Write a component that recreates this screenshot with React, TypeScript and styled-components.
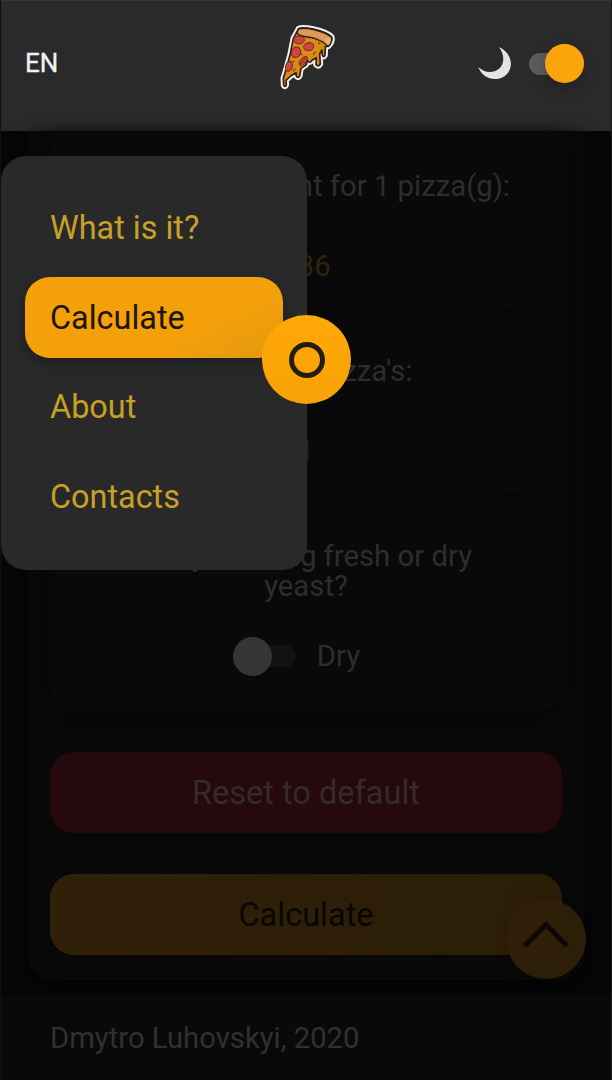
import React from 'react';
import styled, { createGlobalStyle } from 'styled-components';

const GlobalStyle = createGlobalStyle`
  * { box-sizing: border-box; }
  body {
    margin: 0;
    background: #060607;
    font-family: Roboto, sans-serif;
    overflow: hidden;
  }
  button { font-family: inherit; border: 0; margin: 0; padding: 0; }
`;

const Screen = styled.div`
  position: relative;
  width: 612px;
  height: 1080px;
  overflow: hidden;
  display: flex;
  flex-direction: column;
  background: #060607;
  border-left: 1px solid #101011;
  border-right: 1px solid #1b1b1c;
`;

const Header = styled.header`
  flex: none;
  height: 131px;
  padding: 0 27px 5px 24px;
  display: grid;
  grid-template-columns: 1fr 80px 1fr;
  align-items: center;
  background: #2a2a2b;
  border-top: 1px solid #363737;
`;

const Language = styled.span`
  margin-top: -2px;
  font-size: 26px;
  line-height: 30px;
  color: #f2f2f2;
  -webkit-text-stroke: 0.3px #f2f2f2;
`;

const Logo = styled.svg`
  display: block;
  width: 80px;
  height: 85px;
  margin-top: -12px;
`;

const ThemeControl = styled.div`
  display: flex;
  align-items: center;
  justify-content: flex-end;
  gap: 16px;
`;

const Moon = styled.svg`
  width: 37px;
  height: 38px;
  margin-top: -3px;
`;

const Track = styled.span<{ $on?: boolean }>`
  display: flex;
  align-items: center;
  justify-content: ${p => (p.$on ? 'flex-end' : 'flex-start')};
  width: ${p => (p.$on ? 55.5 : 63)}px;
  height: 22px;
  border-radius: 11px;
  background: ${p => (p.$on ? '#5b5b5c' : '#121214')};
`;

const Knob = styled.span<{ $on?: boolean }>`
  flex: none;
  width: 39px;
  height: 39px;
  border-radius: 50%;
  background: ${p => (p.$on ? '#fba50d' : '#353537')};
  box-shadow: ${p => (p.$on ? '0 6px 14px rgba(0,0,0,.22)' : 'none')};
`;

const Main = styled.main`
  flex: none;
  height: 864px;
  padding: 0 27px;
`;

const Form = styled.form`
  height: 849px;
  padding: 0 22px;
  background: #080809;
  border-radius: 0 0 24px 24px;
  box-shadow: 0 5px 16px #040405;
  display: flex;
  flex-direction: column;
`;

const Fields = styled.section`
  height: 581px;
  flex: none;
  padding: 40px 25px 0;
  display: flex;
  flex-direction: column;
  align-items: center;
  background: #09090a;
  border-radius: 0 0 24px 24px;
  box-shadow: 0 5px 16px #070708;
`;

const Label = styled.label<{ $offset?: number }>`
  display: block;
  padding-right: ${p => p.$offset ?? 0}px;
  font-size: 29.3px;
  line-height: 30px;
  color: #2d2d2f;
  text-align: center;
  white-space: pre-line;
`;

const Value = styled.output`
  width: 100%;
  height: 81px;
  margin: 25px 0 49px;
  padding-bottom: 2px;
  display: flex;
  align-items: center;
  justify-content: center;
  font-size: 29.3px;
  color: #2c240c;
  background: #09090a;
  border-radius: 24px;
  box-shadow: 0 5px 14px #070708;
`;

const YeastRow = styled.div`
  display: flex;
  align-items: center;
  gap: 21px;
  margin: 40px 19px 0 0;
`;

const Button = styled.button<{ $danger?: boolean }>`
  flex: none;
  width: 512px;
  height: 81px;
  margin-top: ${p => (p.$danger ? 40 : 41)}px;
  border-radius: 24px;
  font-size: 32.5px;
  line-height: 40px;
  color: ${p => (p.$danger ? '#342b2a' : '#080704')};
  background: ${p => (p.$danger ? '#26090d' : 'linear-gradient(100deg, #302009, #2c1d06)')};
`;

const Footer = styled.footer`
  height: 85px;
  padding: 28px 49px;
  font-size: 29.25px;
  line-height: 30px;
  color: #303032;
  background: #09090a;
`;

const ScrollTop = styled.button`
  position: absolute;
  left: 505px;
  top: 899px;
  width: 80px;
  height: 80px;
  border-radius: 50%;
  background: rgba(48, 32, 9, .94);
  box-shadow: 0 5px 12px rgba(0,0,0,.16);
`;

const Menu = styled.nav`
  position: absolute;
  left: 0;
  top: 155.5px;
  width: 305.5px;
  height: 414.5px;
  padding: 32px 24px;
  display: flex;
  flex-direction: column;
  gap: 8.2px;
  background: #292929;
  border-radius: 25px;
`;

const MenuItem = styled.a<{ $active?: boolean }>`
  display: flex;
  align-items: center;
  height: 81.4px;
  padding: 0 25px;
  border-radius: 25px;
  font-size: 32.4px;
  line-height: 40px;
  color: ${p => (p.$active ? '#1c1508' : '#c7a027')};
  background: ${p => (p.$active ? 'linear-gradient(155deg, #f4a00b 65%, #e3980f)' : 'none')};
  box-shadow: ${p => (p.$active ? '0 6px 14px rgba(0,0,0,.28)' : 'none')};
`;

const MenuToggle = styled.button`
  position: absolute;
  left: 261px;
  top: 315px;
  width: 89px;
  height: 89px;
  border-radius: 50%;
  display: flex;
  align-items: center;
  justify-content: center;
  background: linear-gradient(#ffa806, #f9a207);
`;

const Ring = styled.span`
  width: 36px;
  height: 36px;
  border: 5px solid #211d14;
  border-radius: 50%;
`;

const SLICE =
  'M101 41 C108 36 125 38 145 42 C168 47 193 57 200 66 C204 74 196 89 190 94 L181 94 L180 121 Q176 129 172 121 L171 105 L164 117 L166 147 Q160 157 153 149 L154 128 L141 136 Q134 147 128 137 L123 150 L108 160 L104 183 Q99 191 94 183 L93 173 L77 183 L63 196 L64 209 Q61 218 56 211 L55 190 L64 160 L76 116 L85 70 Z';

const PizzaLogo = () => (
  <Logo viewBox="0 0 240 255" aria-label="Pizza">
    <path d={SLICE} fill="#eee" stroke="#eee" strokeWidth="17" strokeLinejoin="round" />
    <path d={SLICE} fill="#d88b16" stroke="#33200f" strokeWidth="5" strokeLinejoin="round" />
    <path d="M101 42 C130 35 180 51 200 67 Q202 83 190 93 C179 84 169 77 151 71 C132 65 113 66 99 58 Q94 50 101 42Z" fill="#d99a5b" stroke="#33200f" strokeWidth="4" />
    <path d="M180 73 Q185 65 196 68 Q199 79 190 91 Q179 87 180 73Z" fill="#e5ae72" />
    <g fill="#ce4544" stroke="#792516" strokeWidth="3">
      <ellipse cx="102" cy="75" rx="16" ry="12" />
      <ellipse cx="131" cy="95" rx="15" ry="12" transform="rotate(-10 131 95)" />
      <ellipse cx="93" cy="112" rx="14" ry="16" transform="rotate(25 93 112)" />
      <ellipse cx="72" cy="154" rx="10" ry="15" transform="rotate(18 72 154)" />
      <ellipse cx="115" cy="138" rx="8" ry="16" transform="rotate(40 115 138)" />
    </g>
    <path d="M107 147 L123 128 M159 83 L166 86 M151 110 L145 120 M83 137 L88 142 M91 160 L84 169 M111 116 L109 121" fill="none" stroke="#80410f" strokeWidth="4" />
  </Logo>
);

export default function App() {
  return (
    <>
      <GlobalStyle />
      <Screen>
        <Header>
          <Language>EN</Language>
          <PizzaLogo />
          <ThemeControl>
            <Moon viewBox="45 50 111 114" aria-hidden="true">
              <path d="M113 62 C147 76 160 113 141 139 C119 169 66 164 52 122 C67 138 95 143 113 128 C134 111 129 80 113 62Z" fill="#e4e4e6" />
            </Moon>
            <Track $on><Knob $on /></Track>
          </ThemeControl>
        </Header>
        <Main>
          <Form>
            <Fields>
              <Label $offset={5}>Doughball weight for 1 pizza(g):</Label>
              <Value>236</Value>
              <Label>Count of pizza's:</Label>
              <Value>1</Value>
              <Label>{"Are you using fresh or dry\nyeast?"}</Label>
              <YeastRow>
                <Track><Knob /></Track>
                <Label as="span">Dry</Label>
              </YeastRow>
            </Fields>
            <Button type="button" $danger>Reset to default</Button>
            <Button type="button">Calculate</Button>
          </Form>
        </Main>
        <Footer>Dmytro Luhovskyi, 2020</Footer>
        <ScrollTop aria-label="Scroll to top">
          <svg width="80" height="80" viewBox="0 0 80 80" fill="none">
            <path d="M18.5 47 L40 25.5 L61 47" stroke="#0b0806" strokeWidth="5" />
          </svg>
        </ScrollTop>
        <Menu>
          <MenuItem>What is it?</MenuItem>
          <MenuItem $active>Calculate</MenuItem>
          <MenuItem>About</MenuItem>
          <MenuItem>Contacts</MenuItem>
        </Menu>
        <MenuToggle aria-label="Toggle menu"><Ring /></MenuToggle>
      </Screen>
    </>
  );
}
